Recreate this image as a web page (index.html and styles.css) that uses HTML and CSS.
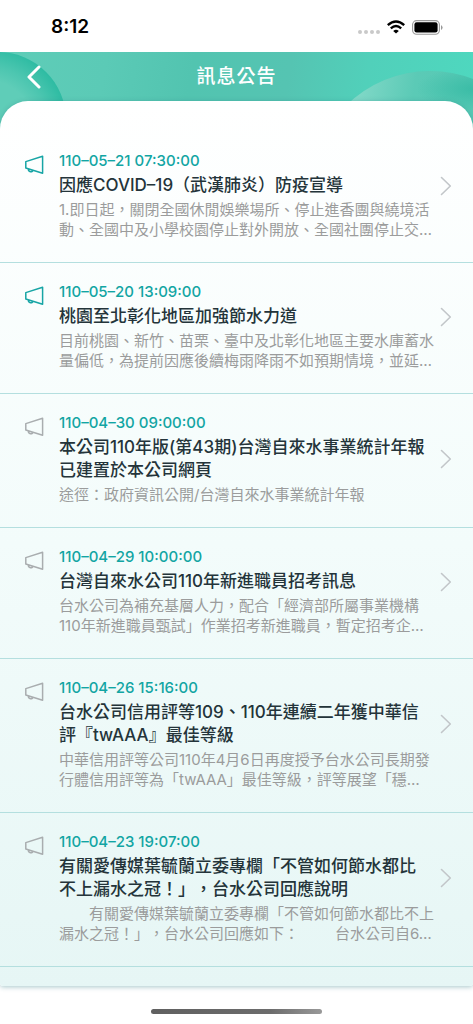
FILE: index.html
```html
<!DOCTYPE html>
<html lang="zh-Hant">
<head>
<meta charset="utf-8">
<meta name="viewport" content="width=device-width, initial-scale=1">
<title>訊息公告</title>
<link rel="stylesheet" href="styles.css">
</head>
<body>
<svg width="0" height="0" class="defs" aria-hidden="true">
  <symbol id="horn" viewBox="0 0 20 20">
    <path d="M1.8 6.6 18.6 1.2V18.2L1.8 13Z M4.3 14C4.2 17.3 8.6 17.5 8.9 15.4" fill="none" stroke="currentColor" stroke-width="1.5" stroke-linejoin="round"/>
  </symbol>
  <symbol id="next" viewBox="0 0 12 20">
    <path d="M1.5 1.5 10.3 10 1.5 18.5" fill="none" stroke="currentColor" stroke-width="1.6" stroke-linecap="round" stroke-linejoin="round"/>
  </symbol>
</svg>
<div class="status">
  <time class="clock">8:12</time>
  <div class="indicators">
    <svg width="22" height="16" viewBox="0 0 22 16" fill="#c9c9c9"><circle cx="2" cy="13" r="2"/><circle cx="8" cy="13" r="2"/><circle cx="14" cy="13" r="2"/><circle cx="20" cy="13" r="2"/></svg>
    <svg width="18" height="14" viewBox="0 0 18 14" fill="none" stroke="#000" stroke-width="2.4"><path d="M.8 5.2Q9-2.2 17.2 5.2"/><path d="M3.8 8.4Q9 3.8 14.2 8.4"/><path d="M9 13.6 6.2 10.9Q9 8.7 11.8 10.9Z" fill="#000" stroke="none"/></svg>
    <svg width="31" height="15" viewBox="0 0 31 15"><rect x=".6" y=".6" width="26.8" height="13.6" rx="4" fill="none" stroke="#999" stroke-width="1.1"/><rect x="2.4" y="2.3" width="23.2" height="10.2" rx="2.2"/><path d="M29 5V10Q30.6 9 30.6 7.5 30.6 6 29 5Z" fill="#999"/></svg>
  </div>
</div>
<header class="bar">
  <span class="bubble bubble-left"></span>
  <span class="bubble bubble-right"></span>
  <button class="back" type="button" aria-label="返回"><svg width="16" height="24" viewBox="0 0 16 24"><path d="M13 2 3 12 13 22" fill="none" stroke="#fff" stroke-width="3" stroke-linecap="round" stroke-linejoin="round"/></svg></button>
  <h1>訊息公告</h1>
</header>
<main class="card">
  <a class="item unread" href="#n1">
    <svg class="horn"><use href="#horn"/></svg>
    <time class="date">110–05–21 07:30:00</time>
    <h2>因應COVID–19（武漢肺炎）防疫宣導</h2>
    <svg class="next"><use href="#next"/></svg>
    <p>1.即日起，關閉全國休閒娛樂場所、停止進香團與繞境活<br>動、全國中及小學校園停止對外開放、全國社團停止交…</p>
  </a>
  <a class="item unread" href="#n2">
    <svg class="horn"><use href="#horn"/></svg>
    <time class="date">110–05–20 13:09:00</time>
    <h2>桃園至北彰化地區加強節水力道</h2>
    <svg class="next"><use href="#next"/></svg>
    <p>目前桃園、新竹、苗栗、臺中及北彰化地區主要水庫蓄水<br>量偏低，為提前因應後續梅雨降雨不如預期情境，並延…</p>
  </a>
  <a class="item" href="#n3">
    <svg class="horn"><use href="#horn"/></svg>
    <time class="date">110–04–30 09:00:00</time>
    <h2>本公司110年版(第43期)台灣自來水事業統計年報<br>已建置於本公司網頁</h2>
    <svg class="next"><use href="#next"/></svg>
    <p>途徑：政府資訊公開/台灣自來水事業統計年報</p>
  </a>
  <a class="item" href="#n4">
    <svg class="horn"><use href="#horn"/></svg>
    <time class="date">110–04–29 10:00:00</time>
    <h2>台灣自來水公司110年新進職員招考訊息</h2>
    <svg class="next"><use href="#next"/></svg>
    <p>台水公司為補充基層人力，配合「經濟部所屬事業機構<br>110年新進職員甄試」作業招考新進職員，暫定招考企…</p>
  </a>
  <a class="item" href="#n5">
    <svg class="horn"><use href="#horn"/></svg>
    <time class="date">110–04–26 15:16:00</time>
    <h2>台水公司信用評等109、110年連續二年獲中華信<br>評『twAAA』最佳等級</h2>
    <svg class="next"><use href="#next"/></svg>
    <p>中華信用評等公司110年4月6日再度授予台水公司長期發<br>行體信用評等為「twAAA」最佳等級，評等展望「穩…</p>
  </a>
  <a class="item" href="#n6">
    <svg class="horn"><use href="#horn"/></svg>
    <time class="date">110–04–23 19:07:00</time>
    <h2>有關愛傳媒葉毓蘭立委專欄「不管如何節水都比<br>不上漏水之冠！」，台水公司回應說明</h2>
    <svg class="next"><use href="#next"/></svg>
    <p>　　有關愛傳媒葉毓蘭立委專欄「不管如何節水都比不上<br>漏水之冠！」，台水公司回應如下：<span class="indent"></span>台水公司自6…</p>
  </a>
</main>
<footer class="home"><span></span></footer>
</body>
</html>
```
FILE: styles.css
```css
* { box-sizing: border-box; }
body {
  margin: 0;
  background: #fff;
  font-family: Inter, "Noto Sans CJK TC", sans-serif;
  text-spacing-trim: space-all;
}
.defs { position: absolute; }
h1, h2, p { margin: 0; }
.status {
  display: flex;
  align-items: center;
  justify-content: space-between;
  height: 52px;
  padding: 2px 30px 0 51px;
}
.clock { font-size: 19px; font-weight: 600; line-height: 24px; }
.indicators { display: flex; align-items: center; gap: 7px; }
.bar {
  position: relative;
  overflow: hidden;
  display: grid;
  grid-template-columns: 48px 1fr 48px;
  align-items: center;
  padding: 0 8px 38px;
  height: 88px;
  background: linear-gradient(100deg, #5fcdb8 0%, #5bcab6 22%, #52c4b0 40%, #55c4b2 60%, #51d0ba 76%, #4ed8bf 100%);
}
.bubble { position: absolute; border-radius: 50%; }
.bubble-left {
  left: -70px;
  top: 0;
  width: 136px;
  height: 136px;
  background: radial-gradient(circle at 40% 58%, #5fcdb8 45%, #4cc6b0 58%, #2cbba2 76%);
}
.bubble-right {
  right: -76px;
  top: 19px;
  width: 238px;
  height: 238px;
  background: radial-gradient(ellipse 60px 22px at 165px 18px, #3abca6, #3abca600), linear-gradient(100deg, #8bdccc 12%, #5bcab6 38%, #4cc6b1 100%);
}
.back, .bar h1 { position: relative; }
.back {
  display: flex;
  justify-content: center;
  padding: 0 0 0 3px;
  border: 0;
  background: none;
}
.bar h1 {
  color: #fff;
  font-size: 19px;
  font-weight: 500;
  line-height: 28px;
  letter-spacing: 1px;
  text-align: center;
}
.card {
  position: relative;
  margin-top: -39px;
  padding: 31px 0 19px;
  border-radius: 28px 28px 3px 3px;
  background: linear-gradient(#fff, #f3fcfb 50%, #e6f6f5);
  box-shadow: 0 1px 5px #26737a66;
}
.item {
  display: grid;
  grid-template-columns: 20px 1fr 12px;
  padding: 19px 21px 22px 24px;
  border-bottom: 1px solid #b4dfdf;
  color: #24343a;
  text-decoration: none;
}
.horn {
  grid-row: 1 / 3;
  width: 20px;
  height: 20px;
  margin-top: 4px;
  color: #a9adaf;
}
.unread .horn { color: #17a5a5; }
.date {
  grid-column: 2 / 4;
  margin-left: 15px;
  color: #12a5a3;
  font-size: 15px;
  font-weight: 500;
  line-height: 20px;
}
h2 {
  grid-column: 2;
  margin: 3px 0 3px 15px;
  font-size: 17px;
  font-weight: 500;
  line-height: 23px;
  white-space: nowrap;
}
.next {
  align-self: center;
  width: 12px;
  height: 20px;
  color: #c2c6c9;
}
.item p {
  grid-column: 2 / 4;
  margin-left: 15px;
  color: #9b9c9c;
  font-size: 15px;
  font-weight: 400;
  line-height: 20px;
  white-space: nowrap;
}
.indent { display: inline-block; width: 36px; }
.home {
  display: flex;
  justify-content: center;
  padding-top: 23px;
}
.home span {
  width: 36%;
  height: 5px;
  border-radius: 3px;
  background: linear-gradient(90deg, #606060, #6c6c6c 70%, #999);
}
```
